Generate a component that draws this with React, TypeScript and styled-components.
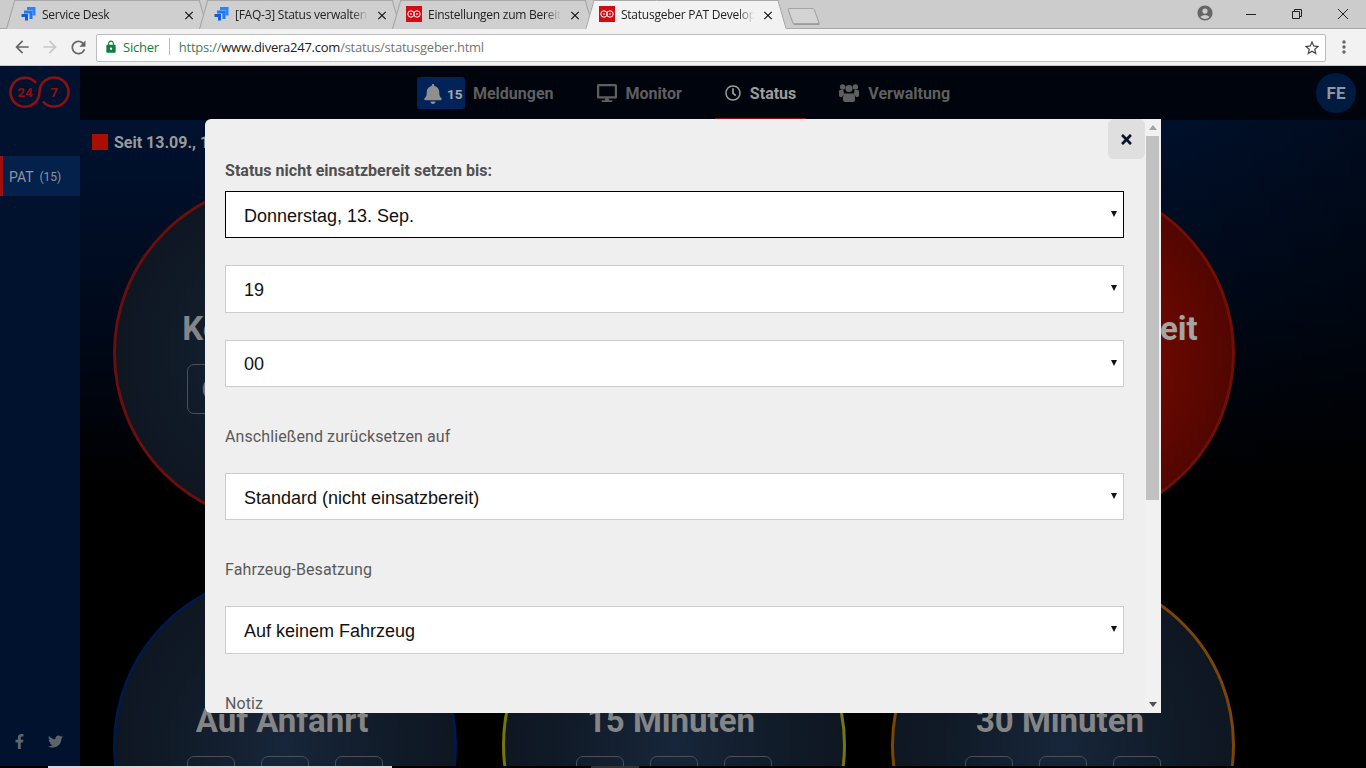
import React from "react";
import styled, { createGlobalStyle } from "styled-components";
import { FaBell, FaDesktop, FaRegClock, FaFacebookF, FaTwitter, FaTimes } from "react-icons/fa";
import { MdArrowBack, MdArrowForward, MdRefresh, MdLock, MdStarBorder, MdMoreVert, MdAccountCircle, MdClose } from "react-icons/md";

const Global = createGlobalStyle`
  html, body { margin: 0; padding: 0; height: 100%; overflow: hidden; background: #000; }
  * { box-sizing: border-box; }
  #root { height: 100%; }
`;

const Page = styled.div`
  width: 1366px; height: 768px; display: flex; flex-direction: column; overflow: hidden;
  font-family: Roboto, "Liberation Sans", sans-serif; position: relative;
`;

/* ---- browser chrome ---- */
const TabStrip = styled.div`
  height: 29px; flex: none; display: flex; background: #cccccc; padding-left: 6px;
  box-shadow: inset 0 -1px 0 #a9a9a9; position: relative;
`;
const Tab = styled.div<{ $active?: boolean }>`
  width: 202px; height: 29px; margin-right: -9px; flex: none; position: relative;
  display: flex; align-items: center; padding: 0 0 1px 14px; isolation: isolate;
  z-index: ${p => (p.$active ? 3 : 1)};
  font: 12px "Open Sans", sans-serif; letter-spacing: -0.25px; color: #222;
  &::before, &::after {
    content: ""; position: absolute; top: 0; width: 60%; z-index: -1;
    height: ${p => (p.$active ? "29px" : "28px")};
    background: ${p => (p.$active ? "#f2f2f2" : "#cfcfcf")};
    border-top: 1px solid #a9a9a9;
  }
  &::before { left: 0; transform-origin: bottom left; transform: skewX(-16deg); border-left: 1px solid #a0a0a0; }
  &::after { right: 0; transform-origin: bottom right; transform: skewX(16deg); border-right: 1px solid #a0a0a0; }
`;
const TabTitle = styled.span`
  width: 133px; margin-left: 6px; white-space: nowrap; overflow: hidden;
  -webkit-mask-image: linear-gradient(to right, #000 88%, transparent);
  mask-image: linear-gradient(to right, #000 88%, transparent);
`;
const TabClose = styled.span`
  position: absolute; left: 176px; top: 8px; width: 14px; height: 14px; color: #111;
  display: flex; align-items: center; justify-content: center;
`;
const NewTab = styled.div`
  width: 27px; height: 16px; margin: 8px 0 0 12px; flex: none; transform: skewX(20deg);
  background: #d3d3d3; border: 1px solid #a5a5a5; border-radius: 2px;
  box-shadow: 0 1px 0 #9a9a9a;
`;
const WindowButtons = styled.div`
  margin-left: auto; display: flex; align-items: flex-start; color: #555;
`;
const ProfileIcon = styled.span`
  display: flex; width: 18px; height: 18px; margin: 4px 14px 0 0; color: #666;
`;
const WinBtn = styled.span`
  width: 46px; height: 29px; display: flex; justify-content: center; padding-top: 8px;
`;
const Toolbar = styled.div`
  height: 37px; flex: none; background: #f2f2f2; border-bottom: 1px solid #c8c8c8;
  display: flex; align-items: center; position: relative; z-index: 4; padding-left: 8px;
`;
const NavBtn = styled.span<{ $off?: boolean }>`
  width: 28px; display: flex; justify-content: center; color: ${p => (p.$off ? "#c7c7c7" : "#666")};
`;
const Omnibox = styled.div`
  margin-left: 4px; width: 1230px; height: 28px; background: #fff; border: 1px solid #bcbcbc; border-radius: 2px;
  display: flex; align-items: center; padding: 0 0 2px 7px; font: 13px "Open Sans", sans-serif; letter-spacing: -0.24px;
  color: #767676; margin-top: 1px;
`;
const Secure = styled.span`
  color: #0b8043; display: flex; align-items: center; gap: 5px; padding-right: 10px; border-right: 1px solid #bbb; height: 17px; margin-right: 9px;
`;
const UrlScheme = styled.span` color: #3f7f5c; `;
const UrlHost = styled.span` color: #222; `;
const Star = styled.span` margin-left: auto; display: flex; color: #444; padding: 2px 4px 0 0; `;
const MenuDots = styled.span` display: flex; color: #666; margin-left: 8px; `;

/* ---- app header ---- */
const Header = styled.header`
  height: 54px; flex: none; background: #00040d; display: grid; grid-template-columns: 1fr auto 1fr; align-items: stretch;
`;
const LogoCell = styled.div`
  width: 80px; background: #00122e; display: flex; align-items: flex-start; padding: 9px 0 0 9px;
`;
const Nav = styled.nav` display: flex; gap: 23px; margin-left: 1px; `;
const NavItem = styled.a<{ $active?: boolean }>`
  display: flex; align-items: center; gap: 9px; padding: 2px 10px 0; height: 54px; font-weight: 700; font-size: 16px;
  color: ${p => (p.$active ? "#9c9c9c" : "#5f5f5f")};
  border-bottom: 2px solid ${p => (p.$active ? "#8c0d0d" : "transparent")};
`;
const Badge = styled.span`
  display: flex; align-items: center; gap: 4px; height: 32px; padding: 1px 0 0 6px; width: 48px; margin-right: -1px;
  background: #01235a; border-radius: 3px; color: #a8a8a8; font-size: 13.500px; font-weight: 700;
  svg { color: #8f8f8f; flex: none; }
`;
const GreyIcon = styled.span<{ $active?: boolean }>` display: flex; color: ${p => (p.$active ? "#9c9c9c" : "#5f5f5f")}; `;
const Avatar = styled.div`
  justify-self: end; align-self: center; width: 40px; height: 40px; margin-right: 10px; border-radius: 50%; background: #001a40;
  display: flex; align-items: center; justify-content: center; color: #8d98a4; font-weight: 700; font-size: 17px;
`;

/* ---- body ---- */
const Body = styled.div` flex: 1; display: flex; min-height: 0; `;
const Sidebar = styled.aside`
  width: 80px; flex: none; background: #00122e; display: flex; flex-direction: column; padding-top: 36px;
`;
const SideItem = styled.div`
  height: 40px; background: #03214a; border-left: 3px solid #a00f0f; display: flex; align-items: center; padding: 2px 0 0 6px; gap: 6px;
  color: #8c96a3; font-size: 14px;
`;
const SideCount = styled.span` font-size: 12px; `;
const Social = styled.div`
  margin-top: auto; display: flex; gap: 21px; padding: 0 0 17px 12px; color: #5d646c;
`;
const Content = styled.main`
  flex: 1; overflow: hidden; background:
    linear-gradient(100deg, rgba(0,0,0,0) 72%, rgba(0,0,0,.5) 100%),
    linear-gradient(to bottom, #001230 0, #000a1c 190px, #000 360px);
`;
const StatusLine = styled.div`
  height: 44px; padding: 14px 0 0 12px; display: flex; align-items: flex-start; gap: 6px;
  color: #9a9a9a; font-weight: 700; font-size: 16px; line-height: 18px;
`;
const StatusSquare = styled.span` width: 16px; height: 16px; background: #a80f00; flex: none; `;
const CircleGrid = styled.div`
  margin-top: 17px; padding-left: 10.500px; display: grid; grid-template-columns: repeat(3, 389px); row-gap: 48px; justify-items: center;
`;
const Circle = styled.div<{ $ring: string; $red?: boolean }>`
  width: 344px; height: 344px; border-radius: 50%; border: 3px solid ${p => p.$ring};
  background: ${p => (p.$red
    ? "radial-gradient(circle, #720b00 0, #6a0900 40%, #3c0300 100%)"
    : "radial-gradient(circle, #17263a 0, #101a27 50%, #0b1119 100%)")};
  display: flex; flex-direction: column; align-items: center; padding-top: 125px;
`;
const CircleTitle = styled.div<{ $red?: boolean; $nudge: number }>`
  height: 40px; line-height: 40px; font-weight: 700; font-size: 33px; white-space: nowrap; color: ${p => (p.$red ? "#a4a4a4" : "#858585")};
  margin-right: ${p => p.$nudge}px;
`;
const Choices = styled.div` display: flex; gap: 26px; margin-top: 15px; `;
const Choice = styled.div`
  width: 48px; height: 50px; border: 1px solid #4a5058; border-radius: 7px; display: flex; align-items: center; justify-content: center;
  color: #6e7276; font-weight: 700; font-size: 28px;
`;
const Strip = styled.div` height: 2px; flex: none; background: #000; display: flex; position: relative; `;
const StripPiece = styled.span<{ $w: number; $c: string; $ml: number }>`
  width: ${p => p.$w}px; margin-left: ${p => p.$ml}px; background: ${p => p.$c}; flex: none;
`;

/* ---- modal ---- */
const Modal = styled.div`
  position: absolute; left: 205px; top: 119px; width: 956px; height: 594px; background: #efefef; border-radius: 6px 0 0 6px;
  display: flex; overflow: hidden; z-index: 5;
`;
const ModalBody = styled.div` flex: 1; padding: 42px 21px 0 20px; overflow: hidden; color: #555; `;
const CloseBtn = styled.div`
  position: absolute; left: 903px; top: 0; width: 37px; height: 40px; background: #dfdfdf; border-radius: 6px;
  display: flex; align-items: center; justify-content: center; padding-right: 1px; color: #0a1428;
`;
const Heading = styled.div` font-weight: 700; font-size: 16px; line-height: 20px; color: #505050; margin-bottom: 10px; letter-spacing: 0.03px; `;
const FieldLabel = styled.div` font-size: 16px; line-height: 20px; color: #5a5a5a; margin: 40px 0 26px; letter-spacing: 0.1px; `;
const SelectBox = styled.div`
  position: relative; height: 47.33px; margin-bottom: 27px;
  &:last-of-type { margin-bottom: 0; }
  &::after {
    content: ""; position: absolute; right: 7px; top: 20px; width: 0; height: 0; pointer-events: none;
    border-left: 3.5px solid transparent; border-right: 3.5px solid transparent; border-top: 6px solid #111;
  }
`;
const Select = styled.select<{ $focus?: boolean }>`
  appearance: none; -webkit-appearance: none; width: 100%; height: 100%; background: #fff; border-radius: 0; outline: none;
  border: 1px solid ${p => (p.$focus ? "#000" : "#cccccc")}; padding: 2px 18px 0; color: #111;
  font: 18px "Liberation Sans", Arial, sans-serif;
`;
const NoteArea = styled.textarea`
  display: block; width: 100%; height: 110px; border: 1px solid #ccc; background: #fff; resize: none;
`;
const Rail = styled.div` width: 16px; flex: none; background: #f1f1f1; display: flex; flex-direction: column; `;
const RailArrow = styled.div` height: 17px; flex: none; display: flex; align-items: center; justify-content: center; `;
const RailThumb = styled.div` height: 364px; margin: 0 2px 0 1px; background: #c1c1c1; `;
const RailFill = styled.div` flex: 1; `;

const Jira = () => (
  <svg width="16" height="16" viewBox="0 0 16 16" fill="none" strokeWidth="3">
    <path d="M7 2.500h7v7" stroke="#2684ff" />
    <path d="M4 6h7v7" stroke="#1f78f0" />
    <path d="M1.500 9.500h5v5" stroke="#0e5fd8" />
  </svg>
);
const Divera = () => (
  <svg width="16" height="16" viewBox="0 0 16 16">
    <rect width="16" height="16" fill="#d60a12" />
    <circle cx="5" cy="8" r="3.2" fill="none" stroke="#fff" strokeWidth="1" />
    <circle cx="11" cy="8" r="3.2" fill="none" stroke="#fff" strokeWidth="1" />
    <circle cx="5" cy="8" r="1" fill="#f7b9bc" />
    <circle cx="11" cy="8" r="1" fill="#f7b9bc" />
  </svg>
);
const Logo = () => (
  <svg width="62" height="34" viewBox="0 0 62 34">
    <path d="M27.100 7.900A14.500 14.500 0 1 0 30.500 17.200A14.500 14.500 0 1 1 34 26.500" fill="none" stroke="#8f0f12" strokeWidth="2.600" />
    <text x="16" y="22" textAnchor="middle" fontFamily="Roboto" fontWeight="700" fontSize="13.500" fill="#8f0f12">24</text>
    <text x="45" y="22" textAnchor="middle" fontFamily="Roboto" fontWeight="700" fontSize="13.500" fill="#8f0f12">7</text>
  </svg>
);
const UsersIcon = () => (
  <svg width="20" height="20" viewBox="0 0 20 20" fill="currentColor">
    <circle cx="3.600" cy="4" r="2.700" />
    <circle cx="16.400" cy="4" r="2.700" />
    <circle cx="10" cy="5.500" r="3.600" />
    <path d="M0 8.200C0 7.400.7 7 1.500 7h3c-.2 1.500.3 3 1.400 4-1.500.8-2.500 2-2.900 3H1.500C.6 14 0 13.500 0 12.600z" />
    <path d="M20 8.200c0-.8-.7-1.200-1.500-1.200h-3c.2 1.500-.3 3-1.400 4 1.500.8 2.500 2 2.900 3h1.500c.9 0 1.500-.5 1.500-1.400z" />
    <path d="M6.500 10.500h7c1.800 0 2.500 2 2.500 4.500v2c0 1.200-.8 2-2 2H6c-1.200 0-2-.8-2-2v-2c0-2.500.7-4.500 2.500-4.500z" />
  </svg>
);

const tabs = [
  { t: "Service Desk", i: <Jira /> },
  { t: "[FAQ-3] Status verwalten", i: <Jira /> },
  { t: "Einstellungen zum Bereitschaft", i: <Divera /> },
  { t: "Statusgeber PAT Development", i: <Divera />, a: true },
];
const circles = [
  { t: "Keine Angabe", r: "#6a0f0d", n: 1 },
  { t: "Einsatzbereit", r: "#1f6a14", n: 6 },
  { t: "Nicht einsatzbereit", r: "#6f0f08", n: 11, red: true },
  { t: "Auf Anfahrt", r: "#00184a", n: 6 },
  { t: "15 Minuten", r: "#77760a", n: 6 },
  { t: "30 Minuten", r: "#7c4504", n: 6 },
];
const glyphs = ["C", "i", "X"];

const Field = ({ value, focus }: { value: string; focus?: boolean }) => (
  <SelectBox>
    <Select $focus={focus} defaultValue={value}><option>{value}</option></Select>
  </SelectBox>
);

export default function App() {
  return (
    <Page>
      <Global />
      <TabStrip>
        {tabs.map(t => (
          <Tab key={t.t} $active={t.a}>
            {t.i}
            <TabTitle>{t.t}</TabTitle>
            <TabClose><MdClose size={15} /></TabClose>
          </Tab>
        ))}
        <NewTab />
        <WindowButtons>
          <ProfileIcon><MdAccountCircle size={18} /></ProfileIcon>
          <WinBtn><svg width="12" height="12" viewBox="0 0 12 12"><path d="M1 6.500h10" stroke="#222" /></svg></WinBtn>
          <WinBtn><svg width="12" height="12" viewBox="0 0 12 12"><path d="M1.500 3.500h7v7h-7zM3.500 3.500v-2h7v7h-2" fill="none" stroke="#222" /></svg></WinBtn>
          <WinBtn><svg width="12" height="12" viewBox="0 0 12 12"><path d="M1 1l10 10M11 1L1 11" stroke="#222" /></svg></WinBtn>
        </WindowButtons>
      </TabStrip>
      <Toolbar>
        <NavBtn><MdArrowBack size={20} /></NavBtn>
        <NavBtn $off><MdArrowForward size={20} /></NavBtn>
        <NavBtn><MdRefresh size={21} /></NavBtn>
        <Omnibox>
          <Secure><MdLock size={14} />Sicher</Secure>
          <UrlScheme>https://</UrlScheme><UrlHost>www.divera247.com</UrlHost>/status/statusgeber.html
          <Star><MdStarBorder size={18} /></Star>
        </Omnibox>
        <MenuDots><MdMoreVert size={20} /></MenuDots>
      </Toolbar>

      <Header>
        <LogoCell><Logo /></LogoCell>
        <Nav>
          <NavItem>
            <Badge><FaBell size={20} />15</Badge>
            Meldungen
          </NavItem>
          <NavItem><GreyIcon><FaDesktop size={20} /></GreyIcon>Monitor</NavItem>
          <NavItem $active><GreyIcon $active><FaRegClock size={16} /></GreyIcon>Status</NavItem>
          <NavItem><GreyIcon><UsersIcon /></GreyIcon>Verwaltung</NavItem>
        </Nav>
        <Avatar>FE</Avatar>
      </Header>

      <Body>
        <Sidebar>
          <SideItem>PAT <SideCount>(15)</SideCount></SideItem>
          <Social><FaFacebookF size={15} /><FaTwitter size={15} /></Social>
        </Sidebar>
        <Content>
          <StatusLine><StatusSquare />Seit 13.09., 15:33 Uhr</StatusLine>
          <CircleGrid>
            {circles.map(c => (
              <Circle key={c.t} $ring={c.r} $red={c.red}>
                <CircleTitle $red={c.red} $nudge={c.n}>{c.t}</CircleTitle>
                <Choices>{glyphs.map(g => <Choice key={g}>{g}</Choice>)}</Choices>
              </Circle>
            ))}
          </CircleGrid>
        </Content>
      </Body>
      <Strip>
        <StripPiece $ml={48} $w={344} $c="#d8d8d8" />
        <StripPiece $ml={199} $w={48} $c="#333" />
      </Strip>

      <Modal>
        <ModalBody>
          <Heading>Status nicht einsatzbereit setzen bis:</Heading>
          <Field value="Donnerstag, 13. Sep." focus />
          <Field value="19" />
          <Field value="00" />
          <FieldLabel>Anschließend zurücksetzen auf</FieldLabel>
          <Field value="Standard (nicht einsatzbereit)" />
          <FieldLabel>Fahrzeug-Besatzung</FieldLabel>
          <Field value="Auf keinem Fahrzeug" />
          <FieldLabel>Notiz</FieldLabel>
          <NoteArea />
        </ModalBody>
        <Rail>
          <RailArrow><svg width="8" height="5" viewBox="0 0 8 5"><path d="M4 0l4 5H0z" fill="#a3a3a3" /></svg></RailArrow>
          <RailThumb />
          <RailFill />
          <RailArrow><svg width="8" height="5" viewBox="0 0 8 5"><path d="M4 5L0 0h8z" fill="#505050" /></svg></RailArrow>
        </Rail>
        <CloseBtn><FaTimes size={15} /></CloseBtn>
      </Modal>
    </Page>
  );
}
